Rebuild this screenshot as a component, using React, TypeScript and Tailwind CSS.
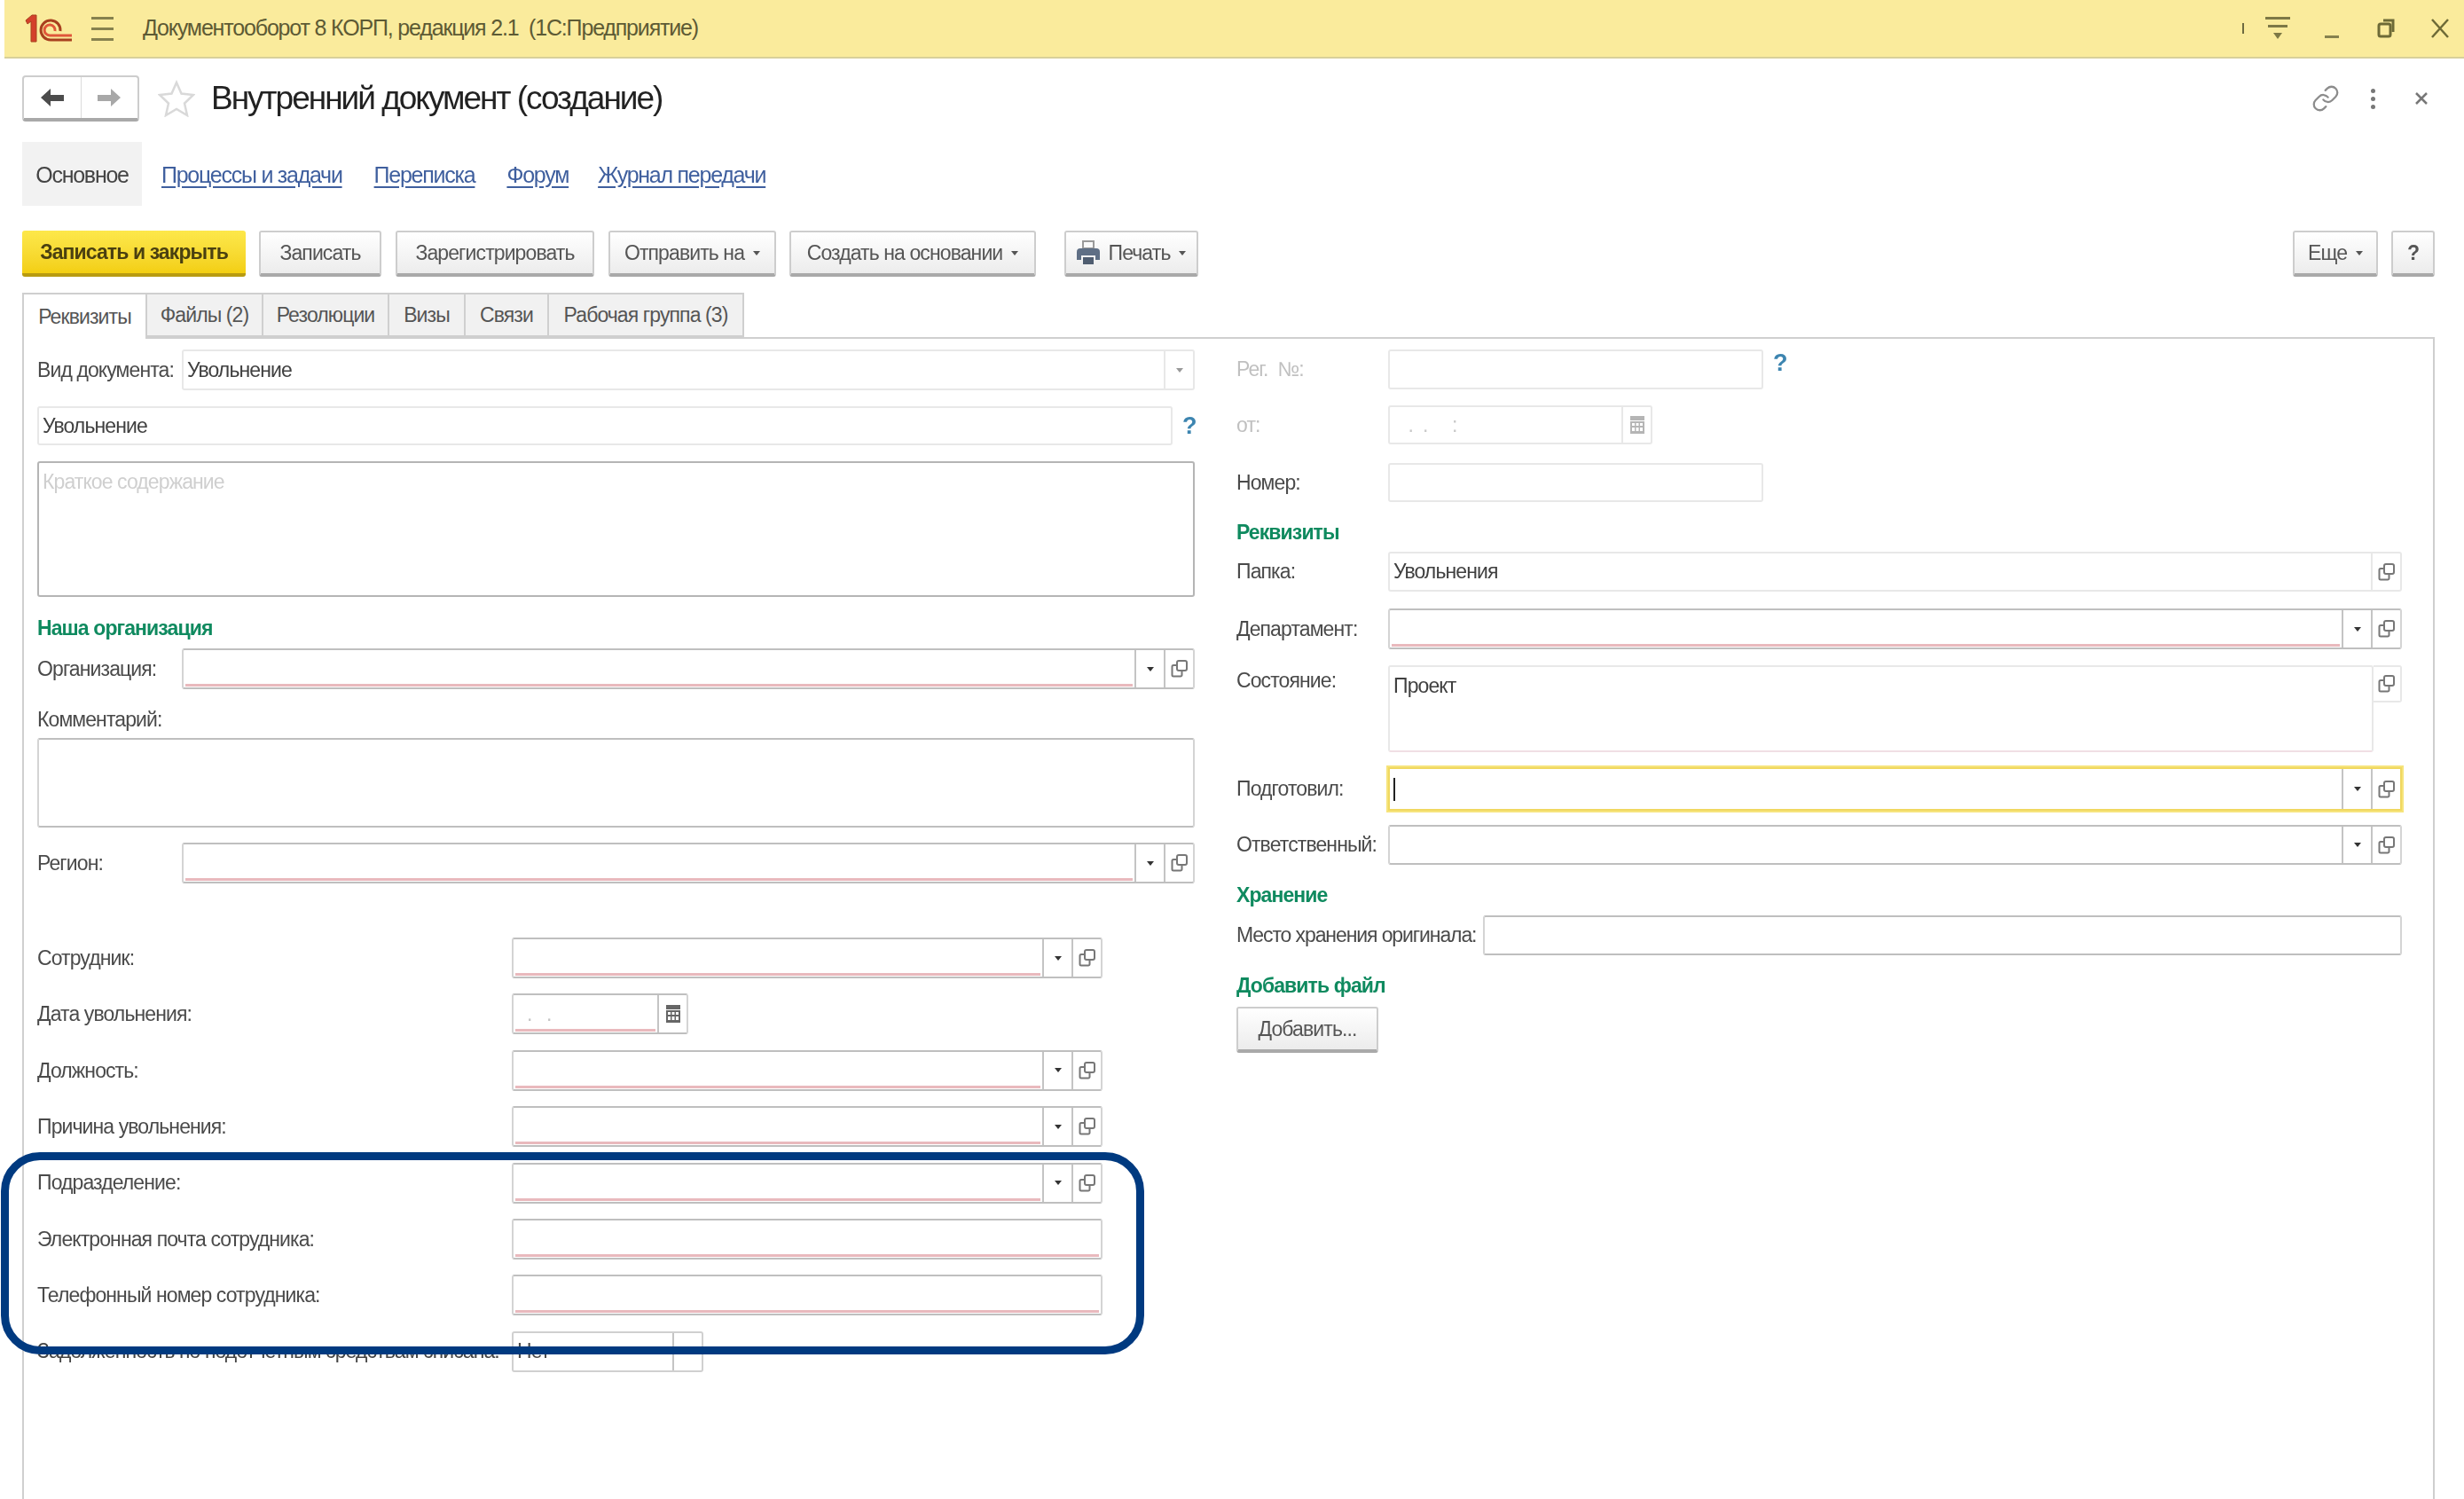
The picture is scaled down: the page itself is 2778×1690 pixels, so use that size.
import type { ReactNode } from 'react';
import { Link } from 'lucide-react';

const OpenIcon = () => (
  <svg width="20" height="22" viewBox="0 0 20 22" fill="none" stroke="#777" strokeWidth="2">
    <rect x="7" y="2" width="11" height="11" rx="2" />
    <path d="M7 7H3a1.5 1.5 0 0 0-1.5 1.5V18A1.5 1.5 0 0 0 3 19.5h8a1.5 1.5 0 0 0 1.5-1.5v-5" />
  </svg>
);

const CalendarIcon = ({ color = '#666' }: { color?: string }) => (
  <svg width="16" height="20" viewBox="0 0 16 20" fill={color}>
    <rect x="0" y="0" width="16" height="5" />
    <path d="M0 6h16v14H0zM2 8v3h3V8zm4.500 0v3h3V8zM11 8v3h3V8zM2 13v4h3v-4zm4.500 0v4h3v-4zm4.500 0v4h3v-4z" fillRule="evenodd" />
  </svg>
);

const Caret = ({ className = 'border-t-[#333]' }: { className?: string }) => (
  <span className={`h-0 w-0 border-x-[4px] border-t-[5px] border-x-transparent ${className}`} />
);

type FieldProps = {
  className: string;
  value?: string;
  placeholder?: string;
  required?: boolean;
  dropdown?: boolean;
  open?: boolean;
  calendar?: boolean;
  light?: boolean;
  faint?: boolean;
  focused?: boolean;
};

// поле ввода 1С: рамка, красная черта обязательного поля, кнопки справа
const Field = ({ className, value, placeholder, required, dropdown, open, calendar, light, faint, focused }: FieldProps) => {
  const border = light ? 'rounded-[3px] border-[#e8e8e8]' : 'rounded-[3px] border-x-[#d4d4d4] border-y-[#bfbfbf]';
  const divider = light ? 'border-[#e8e8e8]' : 'border-[#c4c4c4]';
  return (
    <div
      className={`flex shrink-0 border-2 bg-white ${focused ? 'border-[#f0d860] outline-2 outline-[#f6e47c]' : border} ${className}`}
    >
      <div className="relative flex min-w-0 flex-1 items-center whitespace-pre px-[4px] text-[#404040]">
        {value}
        {placeholder && <span className="text-[#cfcfcf]">{placeholder}</span>}
        {focused && <span className="h-[26px] w-[2px] bg-[#222]" />}
        {required && <span className="absolute inset-x-[2px] bottom-[1px] h-[3px] bg-[#e9b9bd]" />}
      </div>
      {dropdown && (
        <div className={`flex w-[33px] shrink-0 items-center justify-center border-l-2 ${divider}`}>
          <Caret className={light ? 'border-t-[#999]' : 'border-t-[#333]'} />
        </div>
      )}
      {calendar && (
        <div className={`flex w-[33px] shrink-0 items-center justify-center border-l-2 ${divider}`}>
          <CalendarIcon color={faint ? '#b5b5b5' : '#666'} />
        </div>
      )}
      {open && (
        <div className={`flex w-[33px] shrink-0 items-center justify-center border-l-2 ${divider}`}>
          <OpenIcon />
        </div>
      )}
    </div>
  );
};

const GroupTitle = ({ children, className }: { children: ReactNode; className: string }) => (
  <div className={`flex h-[30px] items-center font-bold text-[#0f8a5f] ${className}`}>{children}</div>
);

const Btn = ({ children, className, caret }: { children: ReactNode; className: string; caret?: boolean }) => (
  <div
    className={`flex h-[52px] items-center justify-center gap-[10px] rounded-[3px] border-2 border-b-[4px] border-[#cdcdcd] border-b-[#a9a9a9] bg-gradient-to-b from-white to-[#ececec] text-[#555] ${className}`}
  >
    {children}
    {caret && <Caret className="border-t-[#555]" />}
  </div>
);

const employeeRows = [
  { label: 'Сотрудник:', kind: 'ref' },
  { label: 'Дата увольнения:', kind: 'date' },
  { label: 'Должность:', kind: 'ref' },
  { label: 'Причина увольнения:', kind: 'ref' },
  { label: 'Подразделение:', kind: 'ref' },
  { label: 'Электронная почта сотрудника:', kind: 'text' },
  { label: 'Телефонный номер сотрудника:', kind: 'text' },
];

const tabs = [
  { title: 'Файлы (2)', w: 'w-[131px]' },
  { title: 'Резолюции', w: 'w-[142px]' },
  { title: 'Визы', w: 'w-[86px]' },
  { title: 'Связи', w: 'w-[94px]' },
  { title: 'Рабочая группа (3)', w: 'w-[220px]' },
];

export default function App() {
  return (
    <div className="relative h-[1690px] w-[2778px] overflow-hidden bg-white font-['Liberation_Sans',sans-serif] text-[23px] tracking-[-0.9px]">
      <div className="flex h-full flex-col blur-[0.7px]">
        {/* шапка приложения */}
        <header className="ml-[5px] flex h-[66px] shrink-0 items-center border-b-2 border-[#d8d09a] bg-[#faeb9c] pl-[23px] text-[#5d5a34]">
          <svg width="54" height="34" viewBox="0 0 54 34" fill="none">
            <path d="M1 8 8 2h5v30H7V9l-4 3z" fill="#d4402b" stroke="#a8401f" />
            <path d="M40 20a11 11 0 1 0-11 10h24" stroke="#a8401f" strokeWidth="3" />
            <path d="M34 20a6 6 0 1 0-6 5h25" stroke="#e0573a" strokeWidth="3" />
          </svg>
          <div className="ml-[21px] flex w-[25px] flex-col gap-[9px]">
            <span className="h-[3px] bg-[#86814e]" />
            <span className="h-[3px] bg-[#86814e]" />
            <span className="h-[3px] bg-[#86814e]" />
          </div>
          <span className="ml-[33px] whitespace-pre text-[25px] tracking-[-1.17px]">Документооборот 8 КОРП, редакция 2.1  (1С:Предприятие)</span>
          <div className="ml-auto flex items-center pr-[17px]">
            <span className="h-[12px] w-[2px] bg-[#6d6a40]" />
            <svg className="ml-[24px]" width="28" height="30" viewBox="0 0 28 30" fill="#7d7845">
              <rect y="2" width="28" height="3" />
              <rect x="3" y="11" width="22" height="3" />
              <path d="M9 20h10l-5 7z" />
            </svg>
            <span className="ml-[39px] mt-[18px] h-[3px] w-[16px] bg-[#86814e]" />
            <svg className="ml-[43px]" width="20" height="22" viewBox="0 0 20 22" fill="none" stroke="#6d6a36" strokeWidth="3">
              <rect x="2" y="6" width="13" height="14" rx="2" />
              <path d="M7 2h11v13" />
            </svg>
            <svg className="ml-[41px]" width="20" height="22" viewBox="0 0 20 22" stroke="#6d6a36" strokeWidth="2.500">
              <path d="M1 1l18 20M19 1 1 21" />
            </svg>
          </div>
        </header>

        {/* заголовок формы */}
        <div className="ml-[25px] mr-[41px] mt-[19px] flex h-[52px] shrink-0 items-center">
          <div className="flex h-[52px] w-[132px] rounded-[4px] border-2 border-b-[4px] border-[#cdcdcd] border-b-[#a9a9a9]">
            <div className="flex flex-1 items-center justify-center border-r border-[#dcdcdc]">
              <svg width="26" height="20" viewBox="0 0 26 20" fill="#4c4c4c">
                <path d="M11 0 0 10l11 10v-6h15V7H11z" />
              </svg>
            </div>
            <div className="flex flex-1 items-center justify-center">
              <svg width="26" height="20" viewBox="0 0 26 20" fill="#a8a8a8">
                <path d="M15 0l11 10-11 10v-6H0V7h15z" />
              </svg>
            </div>
          </div>
          <svg className="ml-[21px]" width="42" height="42" viewBox="0 0 42 42" fill="none" stroke="#d9d9d9" strokeWidth="2.500">
            <path d="m21 3 5.500 12.500L40 17l-10 9.500L33 40l-12-7-12 7 3-13.500L2 17l13.500-1.500z" />
          </svg>
          <h1 className="ml-[18px] text-[37px] tracking-[-2px] text-[#222]">Внутренний документ (создание)</h1>
          <div className="ml-auto flex items-center text-[#8c8c8c]">
            <Link size={32} strokeWidth={1.7} />
            <div className="ml-[35px] flex flex-col gap-[4px]">
              <span className="h-[5px] w-[5px] rounded-full bg-[#777]" />
              <span className="h-[5px] w-[5px] rounded-full bg-[#777]" />
              <span className="h-[5px] w-[5px] rounded-full bg-[#777]" />
            </div>
            <svg className="ml-[45px]" width="14" height="14" viewBox="0 0 14 14" stroke="#777" strokeWidth="2.500">
              <path d="M1 1l12 12M13 1 1 13" />
            </svg>
          </div>
        </div>

        {/* панель навигации */}
        <nav className="ml-[25px] mt-[23px] flex h-[72px] shrink-0 items-center pt-[3px] text-[25px] tracking-[-1.25px] text-[#3f5f9e]">
          <span className="-mt-[3px] flex h-[72px] w-[135px] items-center justify-center bg-[#f2f2f2] pt-[3px] text-[#444]">Основное</span>
          <a className="ml-[22px] underline underline-offset-4">Процессы и задачи</a>
          <a className="ml-[36px] underline underline-offset-4">Переписка</a>
          <a className="ml-[36px] underline underline-offset-4">Форум</a>
          <a className="ml-[33px] underline underline-offset-4">Журнал передачи</a>
        </nav>

        {/* командная панель */}
        <div className="ml-[25px] mr-[33px] mt-[28px] flex shrink-0 items-start">
          <div className="flex h-[52px] w-[252px] items-center justify-center rounded-[3px] border-b-[4px] border-[#b89b10] bg-gradient-to-b from-[#fde84a] to-[#f3cf10] font-bold text-[#4a4010]">
            Записать и закрыть
          </div>
          <Btn className="ml-[15px] w-[138px]">Записать</Btn>
          <Btn className="ml-[16px] w-[224px]">Зарегистрировать</Btn>
          <Btn className="ml-[16px] w-[189px]" caret>Отправить на</Btn>
          <Btn className="ml-[15px] w-[278px]" caret>Создать на основании</Btn>
          <Btn className="ml-[32px] w-[151px]" caret>
            <svg width="26" height="28" viewBox="0 0 26 28" fill="#5f6f85">
              <path d="M7 1h12v8H7z" fill="none" stroke="#9a9a9a" strokeWidth="2" />
              <path d="M4 9h18a4 4 0 0 1 4 4v9h-5v-5H5v5H0v-9a4 4 0 0 1 4-4z" />
              <rect x="7" y="19" width="12" height="8" fill="#4f5d70" />
            </svg>
            Печать
          </Btn>
          <Btn className="ml-auto w-[96px]" caret>Еще</Btn>
          <Btn className="ml-[15px] w-[49px] font-bold">?</Btn>
        </div>

        {/* вкладки */}
        <div className="relative z-10 ml-[25px] mt-[18px] flex h-[52px] shrink-0 items-start text-[#555]">
          <div className="flex h-[52px] w-[141px] items-center justify-center border-2 border-b-0 border-[#cfcfcf] bg-white">Реквизиты</div>
          {tabs.map((tab) => (
            <div
              key={tab.title}
              className={`flex h-[50px] items-center justify-center border-2 border-l-0 border-[#cfcfcf] bg-[#f1f1f1] ${tab.w}`}
            >
              {tab.title}
            </div>
          ))}
        </div>

        {/* форма */}
        <main className="-mt-[2px] ml-[25px] flex w-[2720px] flex-1 border-x-2 border-t-2 border-[#cfcfcf] pl-[15px] pt-[12px] text-[#4a4a4a]">
          <section className="flex w-[1305px] shrink-0 flex-col">
            <div className="flex items-center">
              <span className="w-[163px] shrink-0">Вид документа:</span>
              <Field className="h-[46px] flex-1" value="Увольнение" dropdown light />
            </div>
            <div className="mt-[18px] flex items-center">
              <Field className="h-[44px] w-[1280px]" value="Увольнение" light />
              <span className="ml-[11px] text-[27px] font-bold leading-none text-[#3d85b0]">?</span>
            </div>
            <Field className="mt-[18px] h-[153px] w-full !border-[#b5b5b5] [&>div]:items-start [&>div]:pt-[4px]" placeholder="Краткое содержание" />
            <GroupTitle className="mt-[20px]">Наша организация</GroupTitle>
            <div className="mt-[8px] flex items-center">
              <span className="w-[163px] shrink-0">Организация:</span>
              <Field className="h-[46px] flex-1" required dropdown open />
            </div>
            <div className="mt-[19px] flex h-[30px] items-center">Комментарий:</div>
            <Field className="mt-[6px] h-[101px] w-full" />
            <div className="mt-[17px] flex items-center">
              <span className="w-[163px] shrink-0">Регион:</span>
              <Field className="h-[46px] flex-1" required dropdown open />
            </div>
            <div className="mt-[61px] flex flex-col gap-[17.400px]">
              {employeeRows.map((row) => (
                <div key={row.label} className="flex items-center">
                  <span className="w-[535px] shrink-0">{row.label}</span>
                  {row.kind === 'ref' && <Field className="h-[46px] w-[666px]" required dropdown open />}
                  {row.kind === 'date' && <Field className="h-[46px] w-[199px] [&>div:first-child]:text-[#c4c4c4]" required calendar value="  .   ." />}
                  {row.kind === 'text' && <Field className="h-[46px] w-[666px]" required />}
                </div>
              ))}
              <div className="flex items-center">
                <span className="w-[535px] shrink-0 whitespace-nowrap text-[#444]">Задолженность по подотчетным средствам списана:</span>
                <div className="flex h-[46px] w-[216px] shrink-0 rounded-[3px] border-2 border-[#d0d0d0]">
                  <span className="flex flex-1 items-center px-[4px]">Нет</span>
                  <span className="flex w-[33px] items-center justify-center border-l-2 border-[#c4c4c4]" />
                </div>
              </div>
            </div>
          </section>

          <section className="ml-[47px] flex w-[1315px] shrink-0 flex-col">
            <div className="flex items-center text-[#c0c0c0]">
              <span className="w-[171px] shrink-0 whitespace-pre">Рег.  №:</span>
              <Field className="h-[45px] w-[423px]" light />
              <span className="mb-[14px] ml-[11px] text-[27px] font-bold leading-none text-[#3d85b0]">?</span>
            </div>
            <div className="mt-[18px] flex items-center text-[#c0c0c0]">
              <span className="w-[171px] shrink-0">от:</span>
              <Field className="h-[44px] w-[298px] [&>div:first-child]:text-[#c8c8c8]" value="   .  .     :" calendar light faint />
            </div>
            <div className="mt-[21px] flex items-center">
              <span className="w-[171px] shrink-0">Номер:</span>
              <Field className="h-[44px] w-[423px]" light />
            </div>
            <GroupTitle className="mt-[19px]">Реквизиты</GroupTitle>
            <div className="mt-[7px] flex items-center">
              <span className="w-[171px] shrink-0">Папка:</span>
              <Field className="h-[45px] w-[1143px]" value="Увольнения" open light />
            </div>
            <div className="mt-[19px] flex items-center">
              <span className="w-[171px] shrink-0">Департамент:</span>
              <Field className="h-[46px] w-[1143px]" required dropdown open />
            </div>
            <div className="mt-[18px] flex h-[98px] items-start">
              <span className="w-[171px] shrink-0">Состояние:</span>
              <div className="flex h-full w-[1111px] shrink-0 items-start rounded-[3px] border-2 border-[#e8e8e8] border-b-[#f0dfe4] px-[4px] pt-[4px] text-[#404040]">Проект</div>
              <div className="flex h-[42px] w-[32px] shrink-0 items-center justify-center rounded-r-[3px] border-2 border-l-0 border-[#e8e8e8]">
                <OpenIcon />
              </div>
            </div>
            <div className="mt-[17px] flex items-center">
              <span className="w-[171px] shrink-0">Подготовил:</span>
              <Field className="h-[49px] w-[1143px]" dropdown open focused />
            </div>
            <div className="mt-[16px] flex items-center">
              <span className="w-[171px] shrink-0">Ответственный:</span>
              <Field className="h-[45px] w-[1143px]" dropdown open />
            </div>
            <GroupTitle className="mt-[19px]">Хранение</GroupTitle>
            <div className="mt-[8px] flex items-center">
              <span className="w-[278px] shrink-0 tracking-[-1.1px]">Место хранения оригинала:</span>
              <Field className="h-[45px] w-[1036px]" />
            </div>
            <GroupTitle className="mt-[19px]">Добавить файл</GroupTitle>
            <Btn className="mt-[9px] w-[160px]">Добавить...</Btn>
          </section>
        </main>
      </div>

      {/* выделение группы полей поверх формы */}
      <div className="absolute left-[1px] top-[1299px] h-[228px] w-[1289px] rounded-[44px] border-[9px] border-[#003a80]" />
    </div>
  );
}
